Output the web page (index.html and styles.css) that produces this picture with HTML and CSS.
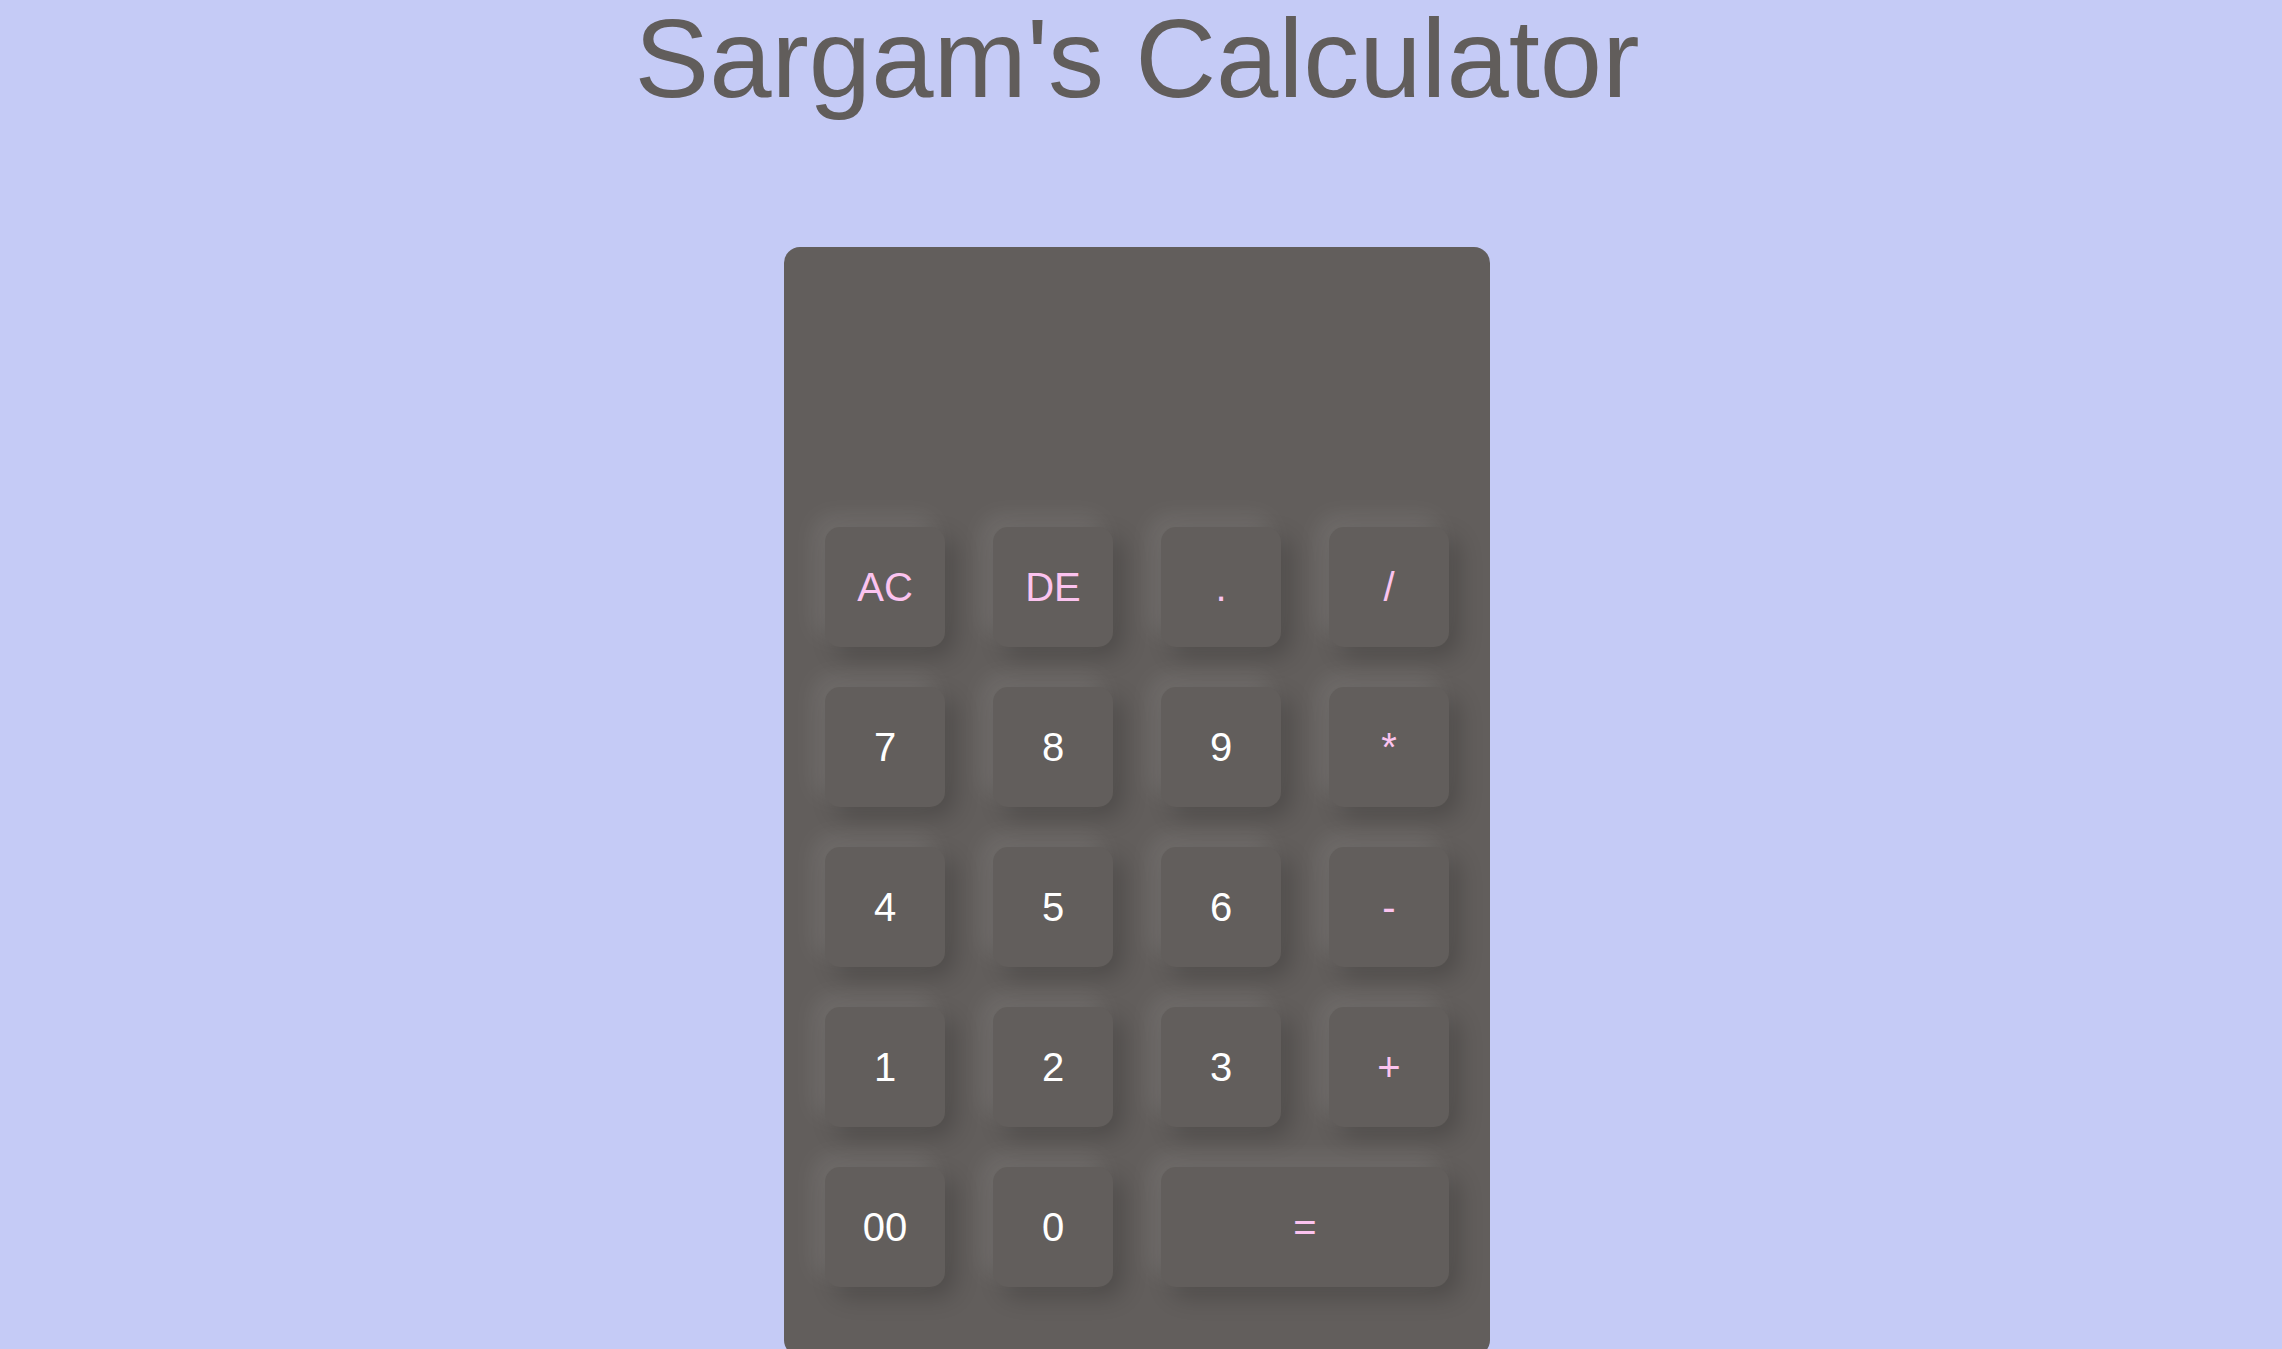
FILE: index.html
```html
<!DOCTYPE html>
<html lang="en">
<head>
<meta charset="utf-8">
<title>Sargam's Calculator</title>
<link rel="stylesheet" href="styles.css">
</head>
<body>
<h1 class="title">Sargam's Calculator</h1>
<div class="calculator">
  <div class="display"></div>
  <div class="keys">
    <button class="key op">AC</button>
    <button class="key op">DE</button>
    <button class="key op">.</button>
    <button class="key op">/</button>
    <button class="key">7</button>
    <button class="key">8</button>
    <button class="key">9</button>
    <button class="key op">*</button>
    <button class="key">4</button>
    <button class="key">5</button>
    <button class="key">6</button>
    <button class="key op">-</button>
    <button class="key">1</button>
    <button class="key">2</button>
    <button class="key">3</button>
    <button class="key op">+</button>
    <button class="key">00</button>
    <button class="key">0</button>
    <button class="key op wide">=</button>
  </div>
</div>
</body>
</html>
```
FILE: styles.css
```css
html, body {
  margin: 0;
  padding: 0;
}
html {
  overflow: hidden;
}
body {
  background: #c5cbf6;
  font-family: "Liberation Sans", Arial, sans-serif;
  display: flex;
  flex-direction: column;
  align-items: center;
  padding-right: 8px;
  min-height: 1349px;
  box-sizing: border-box;
}
.title {
  margin: 3px 0 0 0;
  font-size: 112px;
  line-height: 112px;
  font-weight: normal;
  color: #615d5b;
}
.calculator {
  margin-top: 132px;
  width: 706px;
  box-sizing: border-box;
  background: #625e5c;
  border-radius: 16px;
  padding: 40px 41px 69px 41px;
}
.display {
  height: 240px;
}
.keys {
  display: grid;
  grid-template-columns: repeat(4, 120px);
  grid-auto-rows: 120px;
  column-gap: 48px;
  row-gap: 40px;
}
.key {
  border: none;
  margin: 0;
  padding: 0;
  background: #625e5c;
  border-radius: 15px;
  color: #ffffff;
  font-family: "Liberation Sans", Arial, sans-serif;
  font-size: 40px;
  box-shadow: -10px -10px 25px rgba(255, 255, 255, 0.1), 10px 10px 25px rgba(0, 0, 0, 0.2);
}
.key.op {
  color: #fbc3ef;
}
.key.wide {
  grid-column: span 2;
}
```
